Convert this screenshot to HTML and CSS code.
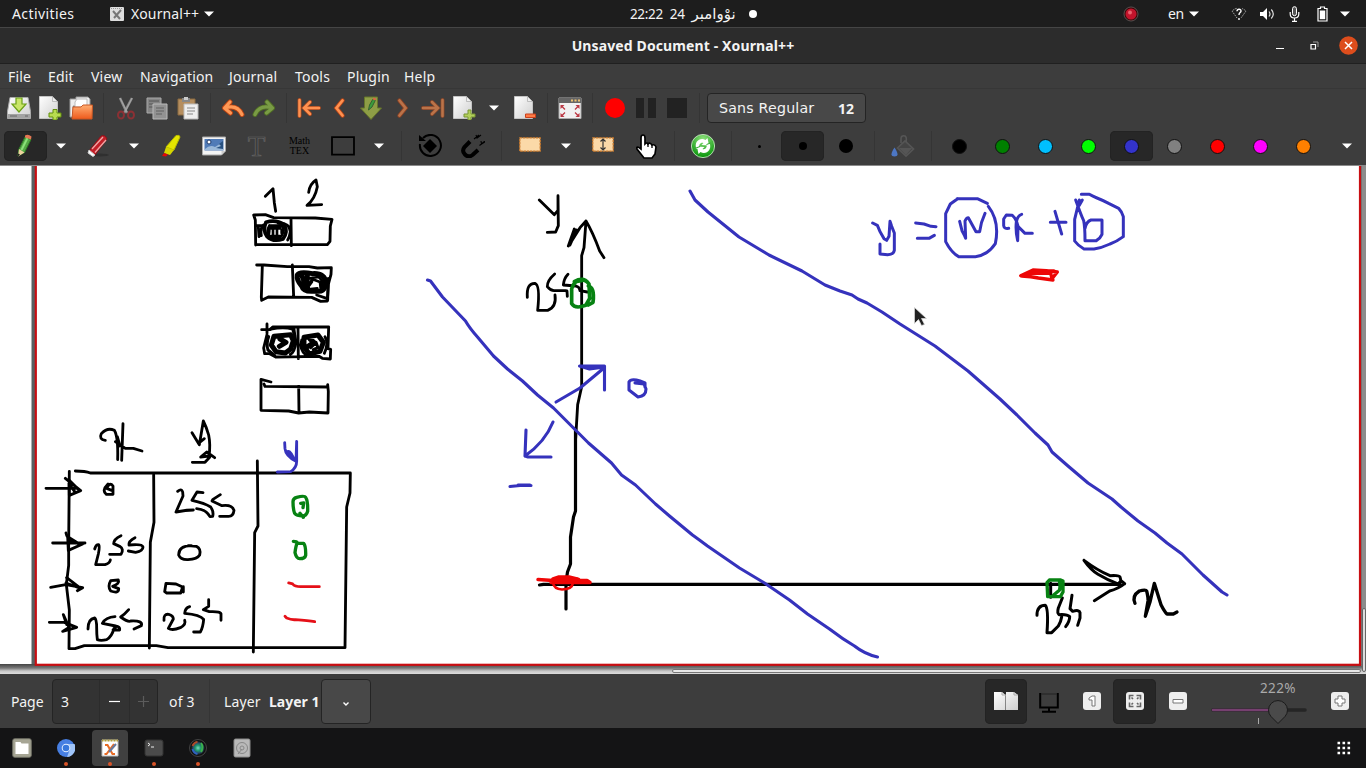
FILE: index.html
```html
<!DOCTYPE html>
<html lang="en">
<head>
<meta charset="utf-8">
<title>Unsaved Document - Xournal++</title>
<link rel="stylesheet" href="styles.css">
</head>
<body>
<svg width="0" height="0" class="defs">
  <defs>
    <linearGradient id="paper" x1="0" y1="0" x2="1" y2="1"><stop offset="0" stop-color="#fff"/><stop offset="1" stop-color="#cfcfcf"/></linearGradient>
    <linearGradient id="orange" x1="0" y1="0" x2="0" y2="1"><stop offset="0" stop-color="#ffae72"/><stop offset="1" stop-color="#ee5a1c"/></linearGradient>
    <radialGradient id="green" cx=".5" cy=".2" r=".8"><stop offset="0" stop-color="#8ee07c"/><stop offset="1" stop-color="#079409"/></radialGradient>
    <radialGradient id="lens"><stop offset="0" stop-color="#7bd9c0"/><stop offset=".4" stop-color="#1d9a6c"/><stop offset=".7" stop-color="#28516e"/><stop offset="1" stop-color="#111"/></radialGradient>
    <symbol id="page" viewBox="0 0 24 24"><path d="M2.5 .5h13l5 5v17h-18z" fill="url(#paper)" stroke="#c4c4c4"/><path d="M15.5 .5v5h5z" fill="#eee" stroke="#a9a9a9" stroke-width=".7"/></symbol>
    <symbol id="down" viewBox="0 0 10 6"><path d="M0 .5h10L5 5.5z" fill="#fff"/></symbol>
    <symbol id="undo" viewBox="0 0 24 24"><path d="M9 6L3.500 12l6 5M4 12c8-2.500 14 0 17 6.500" fill="none" stroke="#ba4312" stroke-width="5" stroke-linecap="round" stroke-linejoin="round"/><path d="M9 6L3.500 12l6 5M4 12c8-2.500 14 0 17 6.500" fill="none" stroke="#ff9855" stroke-width="3.200" stroke-linecap="round" stroke-linejoin="round"/></symbol>
    <symbol id="first" viewBox="0 0 24 24"><path d="M2.500 4v16M22 12H8M13 6l-6 6 6 6" fill="none" stroke="#a8481f" stroke-width="4" stroke-linecap="round"/><path d="M2.500 4v16M22 12H8M13 6l-6 6 6 6" fill="none" stroke="#ff9150" stroke-width="2.500" stroke-linecap="round"/></symbol>
    <symbol id="prev" viewBox="0 0 24 24"><path d="M14.500 4.500l-6 7.500 6 7.500" fill="none" stroke="#b84517" stroke-width="4.400" stroke-linecap="round"/><path d="M14.500 4.500l-6 7.500 6 7.500" fill="none" stroke="#ff9150" stroke-width="2.700" stroke-linecap="round"/></symbol>
  </defs>
</svg>

<header class="panel">
  <span class="activities">Activities</span>
  <span class="app">
    <svg width="14" height="14" viewBox="0 0 14 14"><rect width="14" height="14" rx="1" fill="#ddd"/><path d="M1 1.500h12" stroke="#999" stroke-dasharray="1 1"/><path d="M3 4l7 8M11 3l-7 8" stroke="#777" stroke-width="2"/></svg>
    <span class="app-name">Xournal++</span>
    <svg width="10" height="6"><use href="#down"/></svg>
  </span>
  <span class="clock"><span>22:22</span><span>24</span><span class="month" dir="rtl" lang="ckb">نوْوامبر</span><i class="notice"></i></span>
  <span class="tray">
    <svg class="rec" width="16" height="16" viewBox="0 0 16 16"><circle cx="8" cy="8" r="7" fill="#3a0909" stroke="#777" stroke-width=".6"/><circle cx="8" cy="8" r="5.500" fill="#c3142c"/><circle cx="7" cy="6.500" r="2" fill="#e9626e"/></svg>
    <span class="lang">en</span>
    <svg class="lang-arrow" width="10" height="6"><use href="#down"/></svg>
    <svg class="wifi" width="16" height="14" viewBox="0 0 16 14"><path d="M6 11L1 4c2-1.700 3-2.300 5-2.700M11 1.500q2 .8 4 2.500l-5 7" fill="none" stroke="#aaa" stroke-dasharray="1.500 1"/><path d="M6 4.200c.2-2.800 4.300-2.400 4 0-.2 1.500-2 1.500-2 3.700M8 11v2" fill="none" stroke="#fff" stroke-width="1.400"/></svg>
    <svg class="sound" width="16" height="14" viewBox="0 0 16 14"><path d="M1 5h3l4-4v12L4 9H1z" fill="#fff"/><path d="M10 4.500q2 2.500 0 5M12.300 2.500q4 4.500 0 9" fill="none" stroke="#ddd" stroke-width="1.200"/></svg>
    <svg class="mic" width="11" height="16" viewBox="0 0 11 16"><rect x="3.500" y=".7" width="4" height="9" rx="2" fill="#555" stroke="#fff"/><path d="M1.200 6v2q0 4 4.300 4t4.300-4V6M5.500 12v3M3 15.300h5" fill="none" stroke="#fff" stroke-width="1.200"/></svg>
    <svg class="battery" width="11" height="16" viewBox="0 0 11 16"><path d="M3.500 1h4v1.500H10V15H1V2.500h2.500z" fill="none" stroke="#fff" stroke-width="1.200"/><path d="M2.800 4.500h5.400v8.700H2.800z" fill="#fff"/></svg>
    <svg width="10" height="6"><use href="#down"/></svg>
  </span>
</header>

<div class="titlebar">
  <span class="title">Unsaved Document - Xournal++</span>
  <span class="controls">
    <svg width="8" height="8" viewBox="0 0 8 8"><path d="M0 6.500h8" stroke="#fff"/></svg>
    <svg width="9" height="9" viewBox="0 0 9 9"><path d="M1 3.500h4.500V8H1z" fill="none" stroke="#fff" stroke-width="1.200"/><path d="M3 1h5v5" fill="none" stroke="#999"/></svg>
    <svg width="19" height="19" viewBox="0 0 19 19"><circle cx="9.500" cy="9.500" r="9.300" fill="#dd4d1c"/><path d="M6 6l7 7M13 6l-7 7" stroke="#fff" stroke-width="1.500"/></svg>
  </span>
</div>

<nav class="menubar"><span>File</span><span>Edit</span><span>View</span><span>Navigation</span><span>Journal</span><span>Tools</span><span>Plugin</span><span>Help</span></nav>

<div class="toolbar files">
  <span class="b"><svg width="24" height="24" viewBox="0 0 24 24"><path d="M3 1.500h18l2.500 14v7H.5v-7z" fill="url(#paper)" stroke="#aaa"/><path d="M1 18h22v4H1z" fill="#a3a3a3"/><path d="M3 20h7M18 20h3" stroke="#666"/><path d="M9 2h6v6h4l-7 8-7-8h4z" fill="#c9e669" stroke="#6ca017" stroke-width="1.200"/></svg></span>
  <span class="b"><svg width="24" height="24" viewBox="0 0 24 24"><use href="#page" x="-1"/><path d="M15 13.500h4v3.500h4v4h-4v3h-4v-3h-4v-4h4z" fill="#b9dc50" stroke="#63900d"/></svg></span>
  <span class="b"><svg width="24" height="24" viewBox="0 0 24 24"><path d="M1 3h6V1h12l2 2v7H4v11H1z" fill="#eee" stroke="#999"/><path d="M8 3h10v8H6V6z" fill="#fff" stroke="#bbb"/><path d="M4 11h8l2-2h9.500L23 23H3z" fill="url(#orange)" stroke="#cb5925"/></svg></span>
  <span class="s"></span>
  <span class="b"><svg width="20" height="24" viewBox="0 0 20 24"><path d="M4 2l7 15M16 2L8 17" stroke="#888" stroke-width="2.500"/><path d="M4 2l7 14M16 2L9 16" stroke="#aaa"/><ellipse cx="5" cy="19" rx="3" ry="3.500" fill="none" stroke="#8b3034" stroke-width="2"/><ellipse cx="15" cy="19" rx="3" ry="3.500" fill="none" stroke="#8b3034" stroke-width="2"/></svg></span>
  <span class="b"><svg width="22" height="24" viewBox="0 0 22 24"><path d="M1 2h14v15H1z" fill="#858585" stroke="#aaa"/><path d="M3 5h10M3 8h5M3 11h5" stroke="#555"/><path d="M7 8h14v15H7z" fill="#929292" stroke="#bbb"/><path d="M10 12h8M10 15h8M10 18h6" stroke="#606060"/></svg></span>
  <span class="b"><svg width="22" height="24" viewBox="0 0 22 24"><path d="M1 3h17v16H1z" fill="#b58e5f" stroke="#8b6a41"/><path d="M5 2h8v4H5z" fill="#888"/><path d="M7 1h4v3H7z" fill="#ccc"/><path d="M7 8h14v15H7z" fill="#eee" stroke="#bbb"/><path d="M10 12h8M10 15h8M10 18h6" stroke="#888"/></svg></span>
  <span class="s"></span>
  <span class="b"><svg width="24" height="24"><use href="#undo"/></svg></span>
  <span class="b"><svg class="flip" width="24" height="24" viewBox="0 0 24 24"><path d="M9 6L3.500 12l6 5M4 12c8-2.500 14 0 17 6.500" fill="none" stroke="#506d24" stroke-width="5" stroke-linecap="round" stroke-linejoin="round"/><path d="M9 6L3.500 12l6 5M4 12c8-2.500 14 0 17 6.500" fill="none" stroke="#799b45" stroke-width="3.200" stroke-linecap="round" stroke-linejoin="round"/></svg></span>
  <span class="s"></span>
  <span class="b"><svg width="24" height="24"><use href="#first"/></svg></span>
  <span class="b"><svg width="24" height="24"><use href="#prev"/></svg></span>
  <span class="b"><svg width="24" height="24" viewBox="0 0 24 24"><path d="M5.500 1h13v11h4L12 23.500 1.500 12h4z" fill="#8e9e46" stroke="#66762b"/><path d="M9.500 14l1-5 3.500-6 2.500 1-3.500 7z" fill="#3c9c3c" stroke="#376030"/><path d="M14 2.500l3 1" stroke="#d76745" stroke-width="2"/></svg></span>
  <span class="b dim"><svg class="flip" width="24" height="24"><use href="#prev"/></svg></span>
  <span class="b dim"><svg class="flip" width="24" height="24"><use href="#first"/></svg></span>
  <span class="b"><svg width="24" height="24" viewBox="0 0 24 24"><use href="#page" x="-1"/><path d="M16 14h3v4h4v3h-4v3h-3v-3h-4v-3h4z" fill="#b3cf5b" stroke="#789632"/></svg></span>
  <span class="a"><svg width="10" height="6"><use href="#down"/></svg></span>
  <span class="b"><svg width="24" height="24" viewBox="0 0 24 24"><use href="#page" x="-1"/><path d="M12.500 18h10v3.500h-10z" fill="#ff7b45" stroke="#c8401d"/></svg></span>
  <span class="s"></span>
  <span class="b"><svg width="24" height="24" viewBox="0 0 24 24"><path d="M1 2h22v20.500H1z" fill="#f1f1f1" stroke="#aaa"/><path d="M1 2h22v5H1z" fill="#666"/><path d="M13 4.500h9" stroke="#efc270" stroke-width="2" stroke-dasharray="2 1.500"/><path d="M2.500 9h4l-4 4zM21.500 9h-4l4 4zM2.500 21h4l-4-4zM21.500 21h-4l4-4z" fill="#bb3945"/><path d="M4 10.500l3 3M20 10.500l-3 3M4 19.500l3-3M20 19.500l-3-3" stroke="#bb3945" stroke-width="1.300"/></svg></span>
  <span class="s"></span>
  <span class="b"><svg width="20" height="20"><circle cx="10" cy="10" r="10" fill="#f00"/></svg></span>
  <span class="b"><svg width="20" height="20"><path d="M0 0h8v20H0zM12 0h8v20h-8z" fill="#222"/></svg></span>
  <span class="b"><svg width="20" height="20"><path d="M0 0h20v20H0z" fill="#222"/></svg></span>
  <span class="s last"></span>
  <span class="font"><span>Sans Regular</span><b>12</b></span>
</div>

<div class="toolbar tools">
  <span class="t on"><svg width="24" height="24" viewBox="0 0 24 24"><path d="M4 22l1-7 6-12 6 2.500-6.500 13z" fill="#55a846" stroke="#2b7b22"/><path d="M7.500 16l6-12" stroke="#8be179" stroke-width="2"/><path d="M4 22.500l1-7.500 5.500 3.500z" fill="#eed2a0"/><path d="M4 22.500v-3l2 1z" fill="#222"/><path d="M11 1.500q3-2 6.500 1l-.5 3-6-2z" fill="#e47753"/></svg></span>
  <span class="a first"><svg width="10" height="6"><use href="#down"/></svg></span>
  <span class="t"><svg width="24" height="24" viewBox="0 0 24 24"><ellipse cx="14" cy="21" rx="9" ry="1.500" fill="#303030"/><path d="M3 17L15 2q4-2 6 3L9 21z" fill="#c21f28" stroke="#87151c"/><path d="M6 15L17 3M9 18.500L20 6" stroke="#f0a6a5" stroke-width="1.300"/><path d="M3 16l6 5-2 1.500-5-3.500z" fill="#fff" stroke="#ccc"/></svg></span>
  <span class="a"><svg width="10" height="6"><use href="#down"/></svg></span>
  <span class="t"><svg width="24" height="24" viewBox="0 0 24 24"><path d="M7 13L17 1.500q4-1 4 1.500l-6 13z" fill="#e5e500" stroke="#b8b900"/><path d="M7 13l-2 6 6 2 4-5z" fill="#d5d600"/><path d="M3 22l2-3 4 1.500-2 2z" fill="#e10808"/></svg></span>
  <span class="t"><svg width="24" height="20" viewBox="0 0 24 20"><path d="M.5 1h23v14l-4 4H.500z" fill="#f4f4f4" stroke="#aaa"/><path d="M2.500 3h19v11.500H2.500z" fill="#507bb7"/><path d="M3 13q5-5 10-2l8-5v8H3z" fill="#9bb9d9"/><circle cx="7" cy="6" r="2" fill="#fff" stroke="#203b69"/><path d="M14 12l5-2-2-2 4-3v8z" fill="#285181"/><path d="M19.500 19v-4h4z" fill="#ccc"/></svg></span>
  <span class="t letter">T</span>
  <span class="t math"><span>Math</span><span>TEX</span></span>
  <span class="t"><svg width="24" height="20"><path d="M1 1.200h22v17.500H1z" fill="none" stroke="#000" stroke-width="1.800"/></svg></span>
  <span class="a"><svg width="10" height="6"><use href="#down"/></svg></span>
  <span class="s"></span>
  <span class="t"><svg width="24" height="24" viewBox="0 0 24 24"><path d="M5 4a10.500 10.500 0 1 1-3 6" fill="none" stroke="#000" stroke-width="2"/><path d="M1 1v6h7z"/><path d="M12 5l7 7-7 7-7-7z"/></svg></span>
  <span class="t"><svg width="24" height="24" viewBox="0 0 24 24"><path d="M9 7.500L3.500 13q-3 4 .5 7.500t7.500.500l5.500-5" fill="none" stroke="#000" stroke-width="4"/><path d="M13 5l5-4M18.500 11.500l5-4M15 1l1 3 4-3M20 7l.500 3 4-2.500" stroke="#000" fill="none" stroke-width="1.100"/></svg></span>
  <span class="s"></span>
  <span class="t"><svg class="up" width="22" height="15"><path d="M.8.8h20.400v13.400H.8z" fill="#fbd9a8" stroke="#cc7a2b" stroke-width="1.300" stroke-dasharray="2.500 .700"/></svg></span>
  <span class="a"><svg width="10" height="6"><use href="#down"/></svg></span>
  <span class="t"><svg class="up" width="22" height="15"><path d="M.8.8h20.400v13.400H.8z" fill="#fbd9a8" stroke="#cc7a2b" stroke-width="1.300" stroke-dasharray="2.500 .700"/><path d="M11 2v11M8.500 4.500L11 2l2.500 2.500M8.500 10.500L11 13l2.500-2.500" fill="none" stroke="#333" stroke-width="1.200"/></svg></span>
  <span class="t"><svg width="22" height="25" viewBox="0 0 22 25"><path d="M6 15V4q0-3 2-3t2 3v6q2-2 3 0 2-2 4 1 3-1 4 2l-1 7-3 4H9l-7-9q-1-4 4 0z" fill="#fff" stroke="#000" stroke-width="1.700"/><path d="M13 10v3M17 11v3" stroke="#000" stroke-width="1.300"/></svg></span>
  <span class="s"></span>
  <span class="t"><svg width="24" height="24" viewBox="0 0 24 24"><circle cx="12" cy="12" r="11.600" fill="url(#green)" stroke="#d5efcf" stroke-width=".8"/><path d="M5.500 15C2.500 8 9 3 14.500 6l2-2 1.500 7.500-7.500-.500 2-2C9.500 8 7.500 11 8.500 14z" fill="#fff"/><path d="M18.500 9c3 7-3.500 12-9 9l-2 2L6 12.500l7.500.500-2 2c3 1 5-2 4-5z" fill="#fff"/><path d="M5 14l4-1.500M15.500 10.500l4-1.500" stroke="#2fa82c"/></svg></span>
  <span class="s"></span>
  <span class="t"><i class="dot d1"></i></span><span class="t on"><i class="dot d2"></i></span><span class="t"><i class="dot d3"></i></span>
  <span class="s"></span>
  <span class="t"><svg width="24" height="24" viewBox="0 0 24 24"><path d="M6.500 14l7.500-7 8.500 8-7.500 7z" fill="#444" stroke="#555" stroke-width="1.700"/><path d="M8 14h13l-6 7z" fill="#555"/><path d="M10 9V5q0-4 4-3 2 1 1 6" fill="none" stroke="#565656" stroke-width="1.600"/><path d="M3.500 13.500q6 9 0 9t0-9z" fill="#4d77c4"/></svg></span>
  <span class="s"></span>
  <span class="t"><i class="c black"></i></span><span class="t"><i class="c dgreen"></i></span><span class="t"><i class="c sky"></i></span><span class="t"><i class="c lime"></i></span><span class="t on"><i class="c blue"></i></span><span class="t"><i class="c gray"></i></span><span class="t"><i class="c red"></i></span><span class="t"><i class="c pink"></i></span><span class="t"><i class="c orange"></i></span>
  <span class="t more"><svg width="10" height="6"><use href="#down"/></svg></span>
</div>

<main class="canvas">
<svg width="1366" height="509" viewBox="0 165 1366 509">
  <defs>
    <linearGradient id="edge" x1="0" y1="0" x2="0" y2="1"><stop offset="0" stop-color="#444"/><stop offset=".4" stop-color="#777"/><stop offset=".7" stop-color="#c8c8c8"/><stop offset="1" stop-color="#ddd"/></linearGradient>
  </defs>
  <rect y="165" width="1366" height="509" fill="#596062"/>
  <rect y="166" width="31.500" height="498" fill="#fff"/>
  <rect y="664" width="1366" height="10" fill="url(#edge)"/>
  <rect x="35.800" y="160" width="1324.200" height="504.800" fill="#fff" stroke="#c90e12" stroke-width="2.200"/>
  <path d="M0 165.500h1366" stroke="#8b8b8b"/>
  <rect x="1361.500" y="166" width="4.500" height="500" fill="#8c8c8c"/>
  <rect x="1362.500" y="608.500" width="3" height="63" rx="1.500" fill="#ddd" stroke="#666"/>
  <rect x="672.500" y="669.500" width="688" height="3" rx="1.500" fill="#e8e8e8" stroke="#777"/>
  <g fill="none" stroke="#000" stroke-width="8.500" stroke-linecap="round" stroke-linejoin="round">
    <g transform="translate(30 165) scale(.33333)">
      <path d="M706 94l23-23 4 42 4 26M836 82q3-25 22-37l4 20q-7 37-31 56l44-2"/>
      <path d="M677 240l-1-75-5-15 35-1 25 9 125 1 50 4-5 20-1 46-8 10-215-1M783 160l1 82M678 182h20M685 185l2 30M700 180q-10 10-6 32M745 175q35-2 36 25-2 15-8 25"/>
      <path stroke-width="11" d="M708 172q30-10 55 8 12 20-4 42-30 10-48-8-14-20-3-42"/>
      <path stroke-width="8" d="M718 182h38q8 16-2 32-18 12-36 1-10-16 0-33M726 185h24M718 196l-1 10M729 190v24M741 192v20M755 195v10M720 190h30M720 213h30"/>
      <path d="M680 300h22l70 5 65 0 25 4 42-1-1 20-8 30-3 50-20 1-27-12-130-1-20 10-1-10 3-94M787 300l4 95"/>
      <path stroke-width="15" d="M802 330q5-12 45-4 40-3 41 30-5 28-30 22-37 5-43-15-16-18-13-33M815 330l12 33M832 332l-2 38"/>
      <path stroke-width="8" d="M836 340l30-4 12 12v28l-20 5-20-5-4-18 14-15 22 8 2 18M846 350l-10 14M842 372l20-2"/>
      <path d="M895 340l-2 65M860 390l30 10"/>
      <path d="M711 477v28M695 494h25l8-8h168l-2 65 8 2-1 29-24-2-10-6-130 2-18-10h-15l-3-17 10-40M804 490l1 91M885 515q12 20-2 50M792 492l5 40q-2 28-16 36M815 525q-8 30 14 46"/>
      <path stroke-width="15" d="M732 514l50-5 8 18-8 25-16 12-28-4-14-20zM750 522l18 10-20 12"/>
      <path stroke-width="9" d="M722 492q40-8 66 0l6 20M716 515q-8 20-2 40l20 16"/>
      <path stroke-width="15" d="M822 517l42-7 16 22-10 27-32 8-16-22zM840 522l12 10-18 12"/>
      <path stroke-width="9" d="M842 548l16-16 6 16-14 6"/>
      <path d="M723 651l-30-8v93l83 2 30 6 32-3 56 3 1-65-2-20v7l-188-2-3-7M806 664l1 80"/>
    </g>
    <g transform="translate(30 410) scale(.33333)">
      <path d="M226 91q-20-3-12-20 18-20 39-10 12 20 10 88M279 41l-4 110M256 95l30 20 24 0 26 8M262 80l8 28M486 68l22 36 12-71q10 20 16 42 6 30 1 63l-25 3 18-15 24 17M508 98l15-12M487 157h38l14-15"/>
      <path d="M136 183q30 0 45 6H961l-1 60-10 42-5 422H414l-35-6H163l-28 9h-18l1-116-9-76 7-58v-64l2-218M371 195l1 142-11 60-3 317M682 153l2 195-10 20-4 358"/>
      <path d="M48 235h94M106 205l46 37-34 14-1-46 28 28M120 225l14 20M68 399h97M108 369q6 30 50 33l-43 19-2-41 35 22M62 532l45-8 51 9-16 9M110 503l42 32-44-16M58 637h45l37 15-42 12 19-12-17-38 10 30"/>
      <path d="M234 222q-20 20-5 31h20v-25q-10-13-19 7l15 6M443 244q12-10 15 2l1 12-21 48q30-6 52-6M519 248l-18-2-15 25q38 8 56 20 10 14 6 28l-8 1q-12-22-40-24M571 254l-22 14-3 5 30 14q30-4 36 14-2 18-16 18h-27"/>
      <path d="M194 417q4-14 12-13 4 5 -1 28l-8 32 28 0q14-4 16-14M273 377q-22 10-22 24l18 8q14 8 4 24h-34M315 383q-20 10-18 22 40-4 42 6 0 12-22 16l-22-4"/>
      <path d="M484 407q-38 0-38 28 6 15 28 14 28-2 35-14 5-18-10-26l-24-2M242 512q-10 17 0 31 25 9 24-7l-18-7q22-8 17-19zM408 520l-4 25 6 4h42l6-18-20-9zM460 530v16"/>
      <path d="M174 657q0-30 20-33 6 4 6 30 0 20 2 35 10 4 28 0 16-10 22-34M255 620q-28 2-38 20l40 8q14 2 12 12h-20l8-8M296 599q-12 14-24 22 22 16 30 12 38-2 32 14l-22 10"/>
      <path d="M402 631q-2-20 14-18 14 4 14 14l-15 28q12 8 36-2 18-10 13-22M479 590q-14 4-15 20 46 4 57 18-2 24-10 38h-20M536 569v20l-16 10 18 6q38-2 35 10v16"/>
      <g stroke="#3733bd"><path d="M764 98l1 18q2 22 33 38l2-60v60q0 20-18 31l-40 1M770 128q8-12 20 15M772 126l24 25"/></g>
      <g stroke="#078212" stroke-width="10"><path d="M800 262q24-6 27 0 7 10 6 42-4 14-15 14-18 0-24-8-5-12-5-35 0-10 11-13M812 280l9-1-2 14M810 310l10 12M790 394q10 0 12 4-5 10-7 30 4 18 14 18 16 0 18-10 1-28-6-36l-16 0"/></g>
      <path stroke="#e51018" d="M776 519l12 3q6 8 24 8h56M765 619l5 5q14 6 26 5 40 3 58 6"/>
    </g>
    <g transform="translate(410 165) scale(.33333)">
      <path d="M388 105l45 44 11-13V92l1 90-8 19-25 1M475 243l18-51-14 46 31-50 18-20q20 33 41 90l13 20M480 240l20-45M528 168l-6 80-7 24V665l-12 54-6 101"/>
      <path d="M352 397q-3-43 23-42 16 5 8 81h30q27-10 22-46M434 327q-23 20-22 38 10 12 20 12h34l5 1 1 16M474 328q-12 12-14 32l38 3q12 4 12 14l22 4"/>
      <path stroke="#078212" stroke-width="11" d="M493 350q28-16 44 7l2 43-12 21q-32 12-42-5v-45q8-26 33-28M535 363q20 5 14 49l-14 8M497 350l20-4"/>
    </g>
    <path stroke-width="3.200" d="M575.500 428v83l-2 6-3 20v27l-3 8-1.500 10v27M539.500 585l4-.700H1120"/>
    <g stroke="#3532bc" stroke-width="3.100">
      <path d="M427.500 280l3 1 12 16 23 24q4 7 12 16l16 19 14 13 15 12 15 14 16 13 20 20 15 15 23 20 10 12 14 10 20 19 14 12 23 19q7 5 15 11l32 22 25 15 25 17 18 14 22 15q13 10 25 17 10 8 23 11"/>
      <path d="M690 191L695 200 708 212 739 237 769 255 802 271 825 285 840 291 852 295 858 299 867 303 882 312 900 324 935 346 968 371 1000 399 1017 415 1035 433 1048 445 1052 452 1068 466 1088 483 1112 499 1121 507 1138 521 1155 533 1167 543 1182 554 1203 575 1222 592 1227 595"/>
      <path d="M556 402l24-14 24-20M604.500 390v-24h-25l10 3 15-2M553 422q-8 20-28 34M526 430l-1 26 3 1h23M510 486.500l10-1 11 0M518 485h12M645 387v-4l-5-2q-9-3-11 1v8l9 7q8-1 8-8l-2-5-9-1"/>
    </g>
    <g transform="translate(850 170) scale(.33333)" stroke="#3532bc" stroke-width="9">
      <path d="M68 159l14 7q6 18 20 40l8 5 7-12 3-45 5 15q4 10 8 20v52q-3 13-20 13l-23-2V222M197 159l25 3 21 7 15 1M202 205h35l16-9M321 86h61l30 14M415 109q35 45 21 112-23 35-60 39h-50q-22-12-39-45V131l14-29 22-16M329 154l7 28q8 14 11 23l-2-52q4-10 10-10l23 42h11q4-30 16-55M476 175q-14 2-15-8l0-20 8-12 18 1q12 10 17 32l-1 44q-7-30-4-56 4-20 16-23M503 168l22 22h22M601 157h47M615 124l20 68"/>
      <path d="M694 73h24q10 6 23 11 20 8 35 16l30 15q10 10 14 25v60q-20 15-40 22-26 12-48 15h-30q-18-10-28-24l0-65 14-58M677 90q18 50 24 62 4 18 4 60M688 106l9-16M705 175q4-20 18-25h33v43q-5 12-17 19h-29"/>
      <path stroke="#ed0606" stroke-width="10" d="M512 317l37-17 40 2 33 4-16 20M515 318q30 2 50 6l44 6M530 310h72l4 16M547 303h65"/>
    </g>
    <g transform="translate(1000 520) scale(.33333)">
      <path stroke-width="9" d="M252 121q20 28 42 42 30 18 58 28h8M252 121q40 30 78 46 28-2 30 4l3 12-8 8M374 191l-12-10M374 191q-20 16-45 22l-46 29M152 190v42"/>
      <path stroke-width="9" d="M111 286q0-30 25-30 10 10 5 82l14 0 20-20q8-14 10-27M187 234l-12 30q-4 15 2 20 24-2 32 6 0 14-12 30M216 226l-6 40 8 8q20-6 22 4v16l-7 22"/>
      <path stroke-width="10" d="M405 250q-10-22 13-37 20-6 22 0 5 20 4 30l-8 46 14-43 13-56 20 64q10 20 18 28h19l11-6"/>
      <path stroke="#078212" stroke-width="10" d="M141 188l7-8h34l7 3v33l-8 14h-38zM178 183q4 18 0 28l-18 15"/>
    </g>
    <g stroke="#f00606"><path stroke-width="3.500" d="M538 579.500l15 1h34l3 2h-39M553 579l6-2 10 0 8 2"/><path stroke-width="5" d="M556 580h22"/><path stroke-width="2.500" d="M553 583q1 6 9 6.500 10 0 11-6.500"/></g>
  </g>
  <path d="M914.500 307.500v16l4-4 3 6 3-1-3-6h5z" fill="#222" stroke="#ddd" stroke-width=".7"/>
</svg>
</main>

<footer class="status">
  <span class="page">Page</span>
  <span class="spin"><span class="num">3</span><span class="step"><svg width="11" height="11"><path d="M0 5.500h11" stroke="#fff" stroke-width="1.200"/></svg></span><span class="step"><svg width="11" height="11"><path d="M0 5.500h11M5.500 0v11" stroke="#5c5c5c" stroke-width="1.200"/></svg></span></span>
  <span class="of">of 3</span><i class="line"></i>
  <span class="layer">Layer</span><b class="layer-name">Layer 1</b>
  <span class="combo"><svg width="8" height="6"><path d="M1.500 1.500L4 4l2.500-2.500" fill="none" stroke="#fff" stroke-width="1.400"/></svg></span>
  <span class="views">
    <span class="t on"><svg width="24" height="20" viewBox="0 0 24 20"><path d="M0 1h8l3.500 3v15H0zM12 1h8l4 3v15H12z" fill="url(#paper)"/><path d="M8 1v3h4M20 1v3h4" fill="none" stroke="#aaa"/></svg></span>
    <span class="t"><svg class="screen" width="20" height="20" viewBox="0 0 20 20"><path d="M1.200 0v14.500h17.600V0M10 14v4M3 18.700h14" fill="none" stroke="#000" stroke-width="2"/><path d="M2 1h16" stroke="#222"/></svg></span>
    <span class="t"><svg width="18" height="18" viewBox="0 0 18 18"><rect width="18" height="18" rx="3" fill="#eee"/><path d="M6 6l3-2h3v10H9V8H6z" fill="#fff" stroke="#777"/></svg></span>
    <span class="t on"><svg width="18" height="18" viewBox="0 0 18 18"><rect width="18" height="18" rx="3" fill="#eee"/><path d="M7.500 3.500h-4v4M10.500 3.500h4v4M7.500 14.500h-4v-4M10.500 14.500h4v-4M5.500 5.500L7 7M12.500 5.500L11 7M5.500 12.500L7 11M12.500 12.500L11 11" fill="none" stroke="#666" stroke-width="1.600"/></svg></span>
    <span class="t"><svg width="18" height="18" viewBox="0 0 18 18"><rect width="18" height="18" rx="3" fill="#eee"/><path d="M4 7.500h10v3.500H4z" fill="#fff" stroke="#777"/></svg></span>
  </span>
  <span class="zoom"><span class="pct">222%</span><svg width="96" height="29" viewBox="0 0 96 29"><path d="M2 14h92" stroke="#252525" stroke-width="3.500" stroke-linecap="round"/><path d="M2 14h66" stroke="#764070" stroke-width="2.500" stroke-linecap="round"/><path d="M47.500 22v6" stroke="#aaa"/><path d="M67 27.500l-7-7a9.500 9.500 0 1 1 14 0z" fill="#4a4a4a" stroke="#1b1b1b"/></svg></span>
  <svg class="plus" width="18" height="18" viewBox="0 0 18 18"><rect width="18" height="18" rx="3" fill="#eee"/><path d="M7 4h4v3h3v4h-3v3H7v-3H4V7h3z" fill="#fff" stroke="#777"/></svg>
</footer>

<div class="dock">
  <span class="d"><svg width="20" height="20" viewBox="0 0 20 20"><rect x=".7" y=".7" width="18.600" height="18.600" rx="2" fill="#a6a594" stroke="#6e6e63"/><path d="M3.500 4h5l1 1.500h7V16h-13z" fill="#fff"/></svg></span>
  <span class="d run"><svg width="18" height="18" viewBox="0 0 18 18"><circle cx="9" cy="9" r="9" fill="#477fe2"/><path d="M9 5h8.500A9 9 0 0 1 10 18l3-8z" fill="#9fc4f8"/><circle cx="9" cy="9" r="4.300" fill="#e5efff"/><circle cx="9" cy="9" r="3.300" fill="#3978dc"/></svg></span>
  <span class="d run sel"><svg width="18" height="18" viewBox="0 0 18 18"><path d="M1 1h16v16H1z" fill="#fff" stroke="#bbb"/><path d="M1 1.500h16" stroke="#b09e36" stroke-width="2" stroke-dasharray="1 .5"/><path d="M4 6h2.500l5 9H14M3.500 15h2L13 5" fill="none" stroke="#e86b25" stroke-width="2"/><path d="M8 13l7-8" stroke="#677a9e" stroke-width="2"/></svg></span>
  <span class="d run"><svg width="20" height="18" viewBox="0 0 20 18"><rect x="1" y="1" width="18" height="16" rx="2" fill="#4b4b4b" stroke="#333"/><path d="M4 4l2 1.500L4 7M7 8h3" fill="none" stroke="#eee"/></svg></span>
  <span class="d run"><svg width="18" height="18" viewBox="0 0 18 18"><circle cx="9" cy="9" r="8.500" fill="#111" stroke="#444"/><circle cx="9" cy="9" r="7" fill="url(#lens)"/><path d="M3.500 7q2-4 5-4" stroke="#b04c2a" fill="none" stroke-width="2"/><path d="M3.500 10q1 4 5 5" stroke="#2f62bf" fill="none" stroke-width="2"/><path d="M12 4q3 4 0 9" stroke="#3bb34a" fill="none" stroke-width="2"/></svg></span>
  <span class="d"><svg width="18" height="20" viewBox="0 0 18 20"><rect x="1" y="1" width="16" height="18" rx="1.500" fill="#b9b9b9" stroke="#8b8b8b"/><circle cx="9" cy="10" r="5.500" fill="none" stroke="#888"/><circle cx="9" cy="10" r="2" fill="none" stroke="#888"/><path d="M5 16l4-5" stroke="#888"/></svg></span>
  <svg class="apps" width="14" height="14" viewBox="0 0 14 14"><path d="M.5 2h13M.5 7h13M.5 12h13" stroke="#fff" stroke-width="2.600" stroke-dasharray="2.600 2.400"/></svg>
</div>
</body>
</html>
```
FILE: styles.css
```css
* { box-sizing: border-box; }
body { margin: 0; width: 1366px; height: 768px; overflow: hidden; display: flex; flex-direction: column; background: #3d3d3d; color: #f3f3f3; font: 14px "Noto Sans", "DejaVu Sans", sans-serif; }
svg { display: block; flex: none; }
.defs { height: 0; }
span { white-space: nowrap; }

.panel { height: 27px; background: #1d1d1d; display: grid; grid-template-columns: 110px 520px 1fr 246px; align-items: center; }
.activities { padding-left: 12px; letter-spacing: .4px; }
.app { display: flex; align-items: center; }
.app-name { margin: 0 5px 0 7px; letter-spacing: .1px; }
.clock { display: flex; align-items: center; height: 26px; font-size: 13.500px; letter-spacing: -.35px; }
.clock span + span { margin-left: 7px; }
.clock .month { margin-left: 7px; font: 15px/20px "DejaVu Sans", sans-serif; letter-spacing: 0; }
.notice { width: 8px; height: 8px; border-radius: 50%; background: #fff; margin-left: 13px; }
.tray { display: flex; align-items: center; padding-left: 3px; }
.lang { margin-left: 29px; letter-spacing: -.3px; }
.lang-arrow { margin-left: 5px; margin-right: 32px; }
.sound { margin-left: 12px; }
.mic { margin-left: 14px; }
.battery { margin-left: 17px; margin-right: 12px; }

.titlebar { height: 37px; background: #2c2c2c; border-top: 1px solid #454545; border-bottom: 1px solid #202020; display: grid; grid-template-columns: 1fr auto 1fr; align-items: center; }
.title { grid-column: 2; font-weight: 700; letter-spacing: .12px; }
.controls { display: flex; justify-content: flex-end; align-items: center; padding-right: 8px; gap: 26px; }
.controls svg:nth-child(3) { margin-left: -6px; }

.menubar { height: 25px; display: grid; grid-template-columns: 40px 43px 49px 89px 66px 52px 57px 50px; padding-left: 8px; align-items: center; border-bottom: 1px solid #373737; letter-spacing: .2px; }

.toolbar { display: flex; align-items: center; height: 38px; }
.files { padding-left: 3px; }
.tools { padding-left: 4px; }
.b { width: 31px; display: flex; justify-content: center; flex: none; }
.a { width: 30px; display: flex; justify-content: center; flex: none; }
.a.first { width: 29px; padding-right: 1px; }
.s { width: 14px; height: 30px; flex: none; background: linear-gradient(#353535, #353535) center / 1px 100% no-repeat; }
.s.last { width: 15px; }
.t { width: 43px; height: 30px; display: flex; align-items: center; justify-content: center; flex: none; }
.t.on { background: #272727; border-radius: 5px; box-shadow: inset 0 0 0 1px #232323; }
.flip { transform: scaleX(-1); }
.dim { opacity: .65; }
.up { margin-bottom: 3px; }
.font { width: 159px; height: 30px; border: 1px solid #242424; border-radius: 4px; background: #484848; display: flex; align-items: center; justify-content: space-between; padding: 0 11px; font: 14.200px "DejaVu Sans", sans-serif; letter-spacing: .2px; }
.font b { font: 700 14px "Noto Sans", sans-serif; letter-spacing: 0; }
.letter { font: 29px "Liberation Serif", serif; color: #3c3c3c; -webkit-text-stroke: .7px #666; }
.math { flex-direction: column; font: 10px/10px "Liberation Serif", serif; color: #000; }
.dot { background: #000; border-radius: 50%; }
.d1 { width: 3px; height: 3px; }
.d2 { width: 8px; height: 8px; }
.d3 { width: 14px; height: 14px; }
.c { width: 15px; height: 15px; border-radius: 50%; border: 1px solid #111; }
.black { background: #000; } .dgreen { background: #008000; } .sky { background: #00c0ff; } .lime { background: #0f0; } .blue { background: #3333cc; } .gray { background: #808080; } .red { background: #f00; } .pink { background: #f0f; } .orange { background: #ff8000; }
.more { padding-left: 1px; }

.canvas { height: 509px; flex: none; }

.status { height: 54px; display: flex; align-items: center; padding-left: 11px; flex: none; letter-spacing: -.1px; }
.page { width: 41px; }
.spin { width: 106px; height: 45px; border: 1px solid #242424; border-radius: 4px; background: #333; display: grid; grid-template-columns: 46px 30px 28px; align-items: center; }
.num { padding-left: 8px; }
.step { height: 43px; display: flex; align-items: center; justify-content: center; border-left: 1px solid #2c2c2c; }
.of { margin-left: 11px; width: 40px; letter-spacing: .2px; }
.line { width: 1px; height: 44px; background: #353535; }
.layer { margin-left: 14px; width: 45px; letter-spacing: .1px; }
.layer-name { width: 52px; letter-spacing: 0; white-space: nowrap; }
.combo { width: 50px; height: 45px; border: 1px solid #242424; border-radius: 4px; background: #484848; display: flex; align-items: center; justify-content: center; padding-top: 5px; }
.views { display: flex; margin-left: 614px; align-items: center; }
.views .t { height: 45px; }
.views .t:first-child { width: 42px; }
.screen { margin-top: 4px; }
.zoom { width: 96px; height: 54px; margin-left: 12px; display: flex; flex-direction: column; }
.pct { margin: 5px 0 0 49px; font-size: 13.500px; line-height: 18px; color: #aaa; height: 17px; letter-spacing: .4px; }
.plus { margin-left: 24px; }

.dock { height: 40px; background: #141415; display: flex; align-items: center; flex: none; }
.d { width: 36px; height: 36px; margin-left: 4px; margin-right: 4px; display: flex; align-items: center; justify-content: center; border-radius: 4px; position: relative; }
.sel { background: #404040; }
.run::after { content: ""; position: absolute; bottom: 0; left: 16px; width: 4px; height: 4px; border-radius: 50%; background: #d95327; }
.apps { margin-left: auto; margin-right: 15px; }
```
